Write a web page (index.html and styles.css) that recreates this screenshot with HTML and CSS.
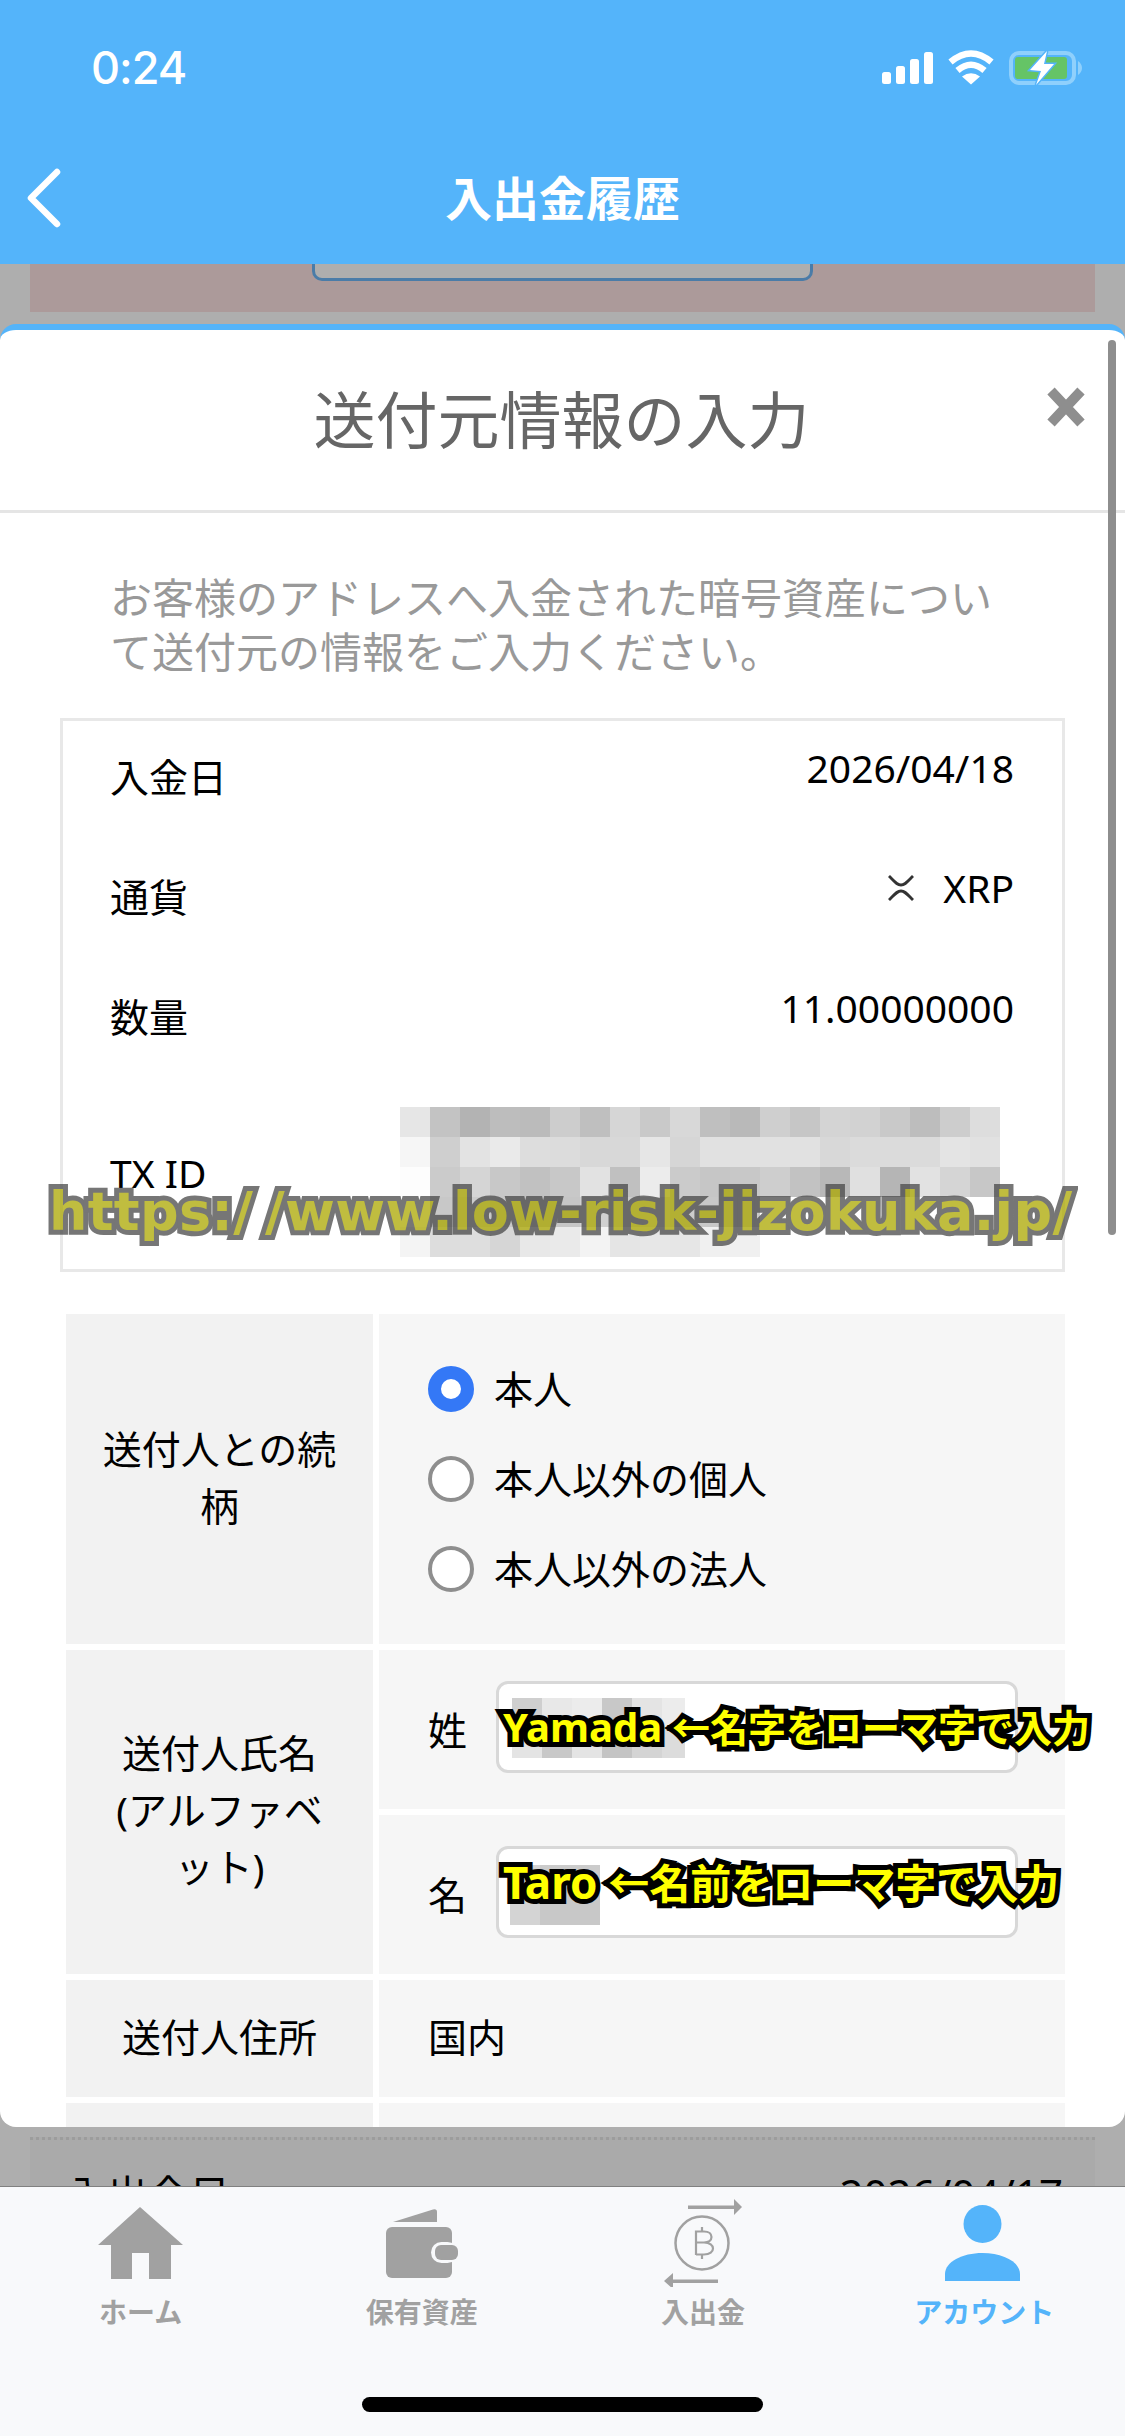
FILE: index.html
```html
<!DOCTYPE html>
<html lang="ja">
<head>
  <meta charset="UTF-8">
  <title>入出金履歴</title>
  <meta name="viewport" content="width=device-width, initial-scale=1">
  <link rel="stylesheet" href="styles.css">
</head>
<body>
  <header class="topbar">
    <div class="status">
      <span class="time">0:24</span>
      <svg class="status-icons" width="204" height="38" viewBox="880 50 204 38">
        <g fill="#fff">
          <rect x="882" y="73" width="9" height="12" rx="2.5"/>
          <rect x="896" y="67" width="9" height="18" rx="2.5"/>
          <rect x="910" y="60" width="9" height="25" rx="2.5"/>
          <rect x="924" y="53" width="9" height="32" rx="2.5"/>
          <path d="M962 77.500 Q971 71 980 77.500 L971 85.500 Z"/>
        </g>
        <g fill="none" stroke="#fff" stroke-width="6.500">
          <path d="M950.500 63 Q971 46 991.500 63"/>
          <path d="M957.500 71.500 Q971 60 984.500 71.500"/>
        </g>
        <rect x="1011" y="54" width="63" height="30" rx="8" fill="none" stroke="#8fd0fc" stroke-width="4"/>
        <path d="M1078 62 q4 3 4 7 t-4 7 z" fill="#8fd0fc"/>
        <rect x="1015" y="58" width="52" height="22" rx="3" fill="#65c466"/>
        <path d="M1047 52 L1030 71 L1041 72 L1036 86 L1054 65 L1044 65 Z" fill="#fff" stroke="#54b4fa" stroke-width="3" paint-order="stroke"/>
      </svg>
    </div>
    <div class="navrow">
      <svg class="back" width="36" height="60" viewBox="0 0 36 60">
        <path d="M31 4 L5 30 L31 56" fill="none" stroke="#fff" stroke-width="6.500" stroke-linecap="round" stroke-linejoin="round"/>
      </svg>
      <h1>入出金履歴</h1>
    </div>
  </header>

  <main class="backdrop">
    <div class="alert-panel"><div class="alert-btn"></div></div>
    <div class="history">
      <span>入出金日</span>
      <span class="history-date">2026/04/17</span>
    </div>
  </main>

  <section class="modal">
    <div class="modal-head">
      <h2>送付元情報の入力</h2>
      <svg class="close" width="40" height="40" viewBox="0 0 40 40">
        <path d="M5 4 L35 36 M35 4 L5 36" stroke="#8e8e8e" stroke-width="10"/>
      </svg>
    </div>
    <p class="lead">お客様のアドレスへ入金された暗号資産について送付元の情報をご入力ください。</p>

    <div class="info">
      <div class="info-row">
        <span class="info-label">入金日</span>
        <span class="info-value">2026/04/18</span>
      </div>
      <div class="info-row">
        <span class="info-label">通貨</span>
        <span class="info-value currency">
          <svg width="28" height="26" viewBox="0 0 28 26">
            <path d="M2 1 C8 7 10 10 14 10 C18 10 20 7 26 1 M2 25 C8 19 10 16 14 16 C18 16 20 19 26 25" fill="none" stroke="#333" stroke-width="2.800"/>
          </svg>
          XRP
        </span>
      </div>
      <div class="info-row">
        <span class="info-label">数量</span>
        <span class="info-value">11.00000000</span>
      </div>
      <div class="info-row tx-row">
        <span class="info-label">TX ID</span>
        <svg class="mosaic tx-mosaic" width="603" height="150" viewBox="0 0 20 5" shape-rendering="crispEdges">
          <g>
            <rect x="0" fill="#e6e6e6"/><rect x="1" fill="#c3c3c3"/><rect x="2" fill="#b3b3b3"/><rect x="3" fill="#bdbdbd"/><rect x="4" fill="#bbbbbb"/><rect x="5" fill="#cdcdcd"/><rect x="6" fill="#bfbfbf"/><rect x="7" fill="#d6d6d6"/><rect x="8" fill="#c9c9c9"/><rect x="9" fill="#d8d8d8"/><rect x="10" fill="#bfbfbf"/><rect x="11" fill="#b9b9b9"/><rect x="12" fill="#cfcfcf"/><rect x="13" fill="#c6c6c6"/><rect x="14" fill="#d4d4d4"/><rect x="15" fill="#d2d2d2"/><rect x="16" fill="#c9c9c9"/><rect x="17" fill="#bdbdbd"/><rect x="18" fill="#cdcdcd"/><rect x="19" fill="#dddddd"/>
          </g>
          <g transform="translate(0 1)">
            <rect x="0" fill="#f6f6f6"/><rect x="1" fill="#cfcfcf"/><rect x="2" fill="#e3e3e3"/><rect x="3" fill="#eaeaea"/><rect x="4" fill="#dddddd"/><rect x="5" fill="#dcdcdc"/><rect x="6" fill="#d8d8d8"/><rect x="7" fill="#d8d8d8"/><rect x="8" fill="#e6e6e6"/><rect x="9" fill="#d6d6d6"/><rect x="10" fill="#e1e1e1"/><rect x="11" fill="#e1e1e1"/><rect x="12" fill="#e1e1e1"/><rect x="13" fill="#e1e1e1"/><rect x="14" fill="#d8d8d8"/><rect x="15" fill="#dbdbdb"/><rect x="16" fill="#dbdbdb"/><rect x="17" fill="#dbdbdb"/><rect x="18" fill="#e4e4e4"/><rect x="19" fill="#e1e1e1"/>
          </g>
          <g transform="translate(0 2)">
            <rect x="0" fill="#fdfdfd"/><rect x="1" fill="#cbcbcb"/><rect x="2" fill="#d5d5d5"/><rect x="3" fill="#c8c8c8"/><rect x="4" fill="#c1c1c1"/><rect x="5" fill="#c8c8c8"/><rect x="6" fill="#e2e2e2"/><rect x="7" fill="#c0c0c0"/><rect x="8" fill="#ececec"/><rect x="9" fill="#cbcbcb"/><rect x="10" fill="#c6c6c6"/><rect x="11" fill="#c8c8c8"/><rect x="12" fill="#cecece"/><rect x="13" fill="#c2c2c2"/><rect x="14" fill="#b8b8b8"/><rect x="15" fill="#e0e0e0"/><rect x="16" fill="#b5b5b5"/><rect x="17" fill="#e2e2e2"/><rect x="18" fill="#d5d5d5"/><rect x="19" fill="#c7c7c7"/>
          </g>
          <g transform="translate(0 3)">
            <rect x="1" fill="#c8c8c8"/><rect x="2" fill="#cccccc"/><rect x="3" fill="#c8c8c8"/><rect x="4" fill="#c4c4c4"/><rect x="5" fill="#c6c6c6"/><rect x="6" fill="#d0d0d0"/><rect x="7" fill="#cccccc"/><rect x="8" fill="#d4d4d4"/><rect x="9" fill="#cccccc"/><rect x="10" fill="#c8c8c8"/><rect x="11" fill="#cacaca"/>
          </g>
          <g transform="translate(0 4)">
            <rect x="0" fill="#f4f4f4"/><rect x="1" fill="#dddddd"/><rect x="2" fill="#dedede"/><rect x="3" fill="#d6d6d6"/><rect x="4" fill="#e8e8e8"/><rect x="5" fill="#eaeaea"/><rect x="6" fill="#f3f3f3"/><rect x="7" fill="#e5e5e5"/><rect x="8" fill="#e7e7e7"/><rect x="9" fill="#e6e6e6"/><rect x="10" fill="#f0f0f0"/><rect x="11" fill="#f0f0f0"/>
          </g>
        </svg>
      </div>
    </div>

    <div class="form">
      <div class="form-label row-relation">送付人との続<br>柄</div>
      <div class="form-value radios">
        <label class="radio-row"><span class="radio checked"></span>本人</label>
        <label class="radio-row"><span class="radio"></span>本人以外の個人</label>
        <label class="radio-row"><span class="radio"></span>本人以外の法人</label>
      </div>

      <div class="form-label row-name">送付人氏名<br>(アルファベ<br>ット)</div>
      <div class="name-cells">
        <div class="name-cell">
          <span class="name-label">姓</span>
          <div class="field">
            <svg class="mosaic" width="173" height="60" viewBox="0 0 5.770 2" shape-rendering="crispEdges">
              <rect x="0" fill="#cfcfcf"/><rect x="1" fill="#e8e8e8"/><rect x="2" fill="#ececec"/><rect x="3" fill="#c8c8c8"/><rect x="4" fill="#e4e4e4"/><rect x="5" fill="#ececec"/>
              <g transform="translate(0 1)">
                <rect x="0" fill="#e4e4e4"/><rect x="1" fill="#c8c8c8"/><rect x="2" fill="#e4e4e4"/><rect x="3" fill="#c4c4c4"/><rect x="4" fill="#d4d4d4"/><rect x="5" fill="#dcdcdc"/>
              </g>
            </svg>
            <span class="note"><span class="note-latin">Yamada</span> ←名字をローマ字で入力</span>
          </div>
        </div>
        <div class="name-cell">
          <span class="name-label">名</span>
          <div class="field">
            <svg class="mosaic taro" width="91" height="60" viewBox="0 0 3 2" shape-rendering="crispEdges">
              <rect x="0" fill="#d4d4d4"/><rect x="1" fill="#cbcbcb"/><rect x="2" fill="#cbcbcb"/>
              <g transform="translate(0 1)">
                <rect x="0" fill="#d4d4d4"/><rect x="1" fill="#c8c8c8"/><rect x="2" fill="#c8c8c8"/>
              </g>
            </svg>
            <span class="note note-taro"><span class="note-latin">Taro</span> ←名前をローマ字で入力</span>
          </div>
        </div>
      </div>

      <div class="form-label row-address">送付人住所</div>
      <div class="form-value address">国内</div>

      <div class="form-label row-last"></div>
      <div class="form-value"></div>
    </div>

    <div class="scrollbar"></div>
  </section>

  <div class="watermark">https:<span class="gap-slash">/</span>/www.low-risk-jizokuka.jp/</div>

  <nav class="tabbar">
    <div class="tabs">
      <div class="tab">
        <svg width="100" height="92" viewBox="90 2195 100 92">
          <path d="M139 2207 L182 2245 L170 2245 L170 2279 L148 2279 L148 2253 L131 2253 L131 2279 L110 2279 L110 2245 L97 2245 Z" fill="#a1a1a1"/>
        </svg>
        <span>ホーム</span>
      </div>
      <div class="tab">
        <svg width="100" height="92" viewBox="372 2195 100 92">
          <path d="M393 2222 L433 2209.500 Q437 2208.500 437 2212 L437 2222 Z" fill="#a1a1a1"/>
          <rect x="386" y="2227" width="66" height="51" rx="6" fill="#a1a1a1"/>
          <rect x="431" y="2242" width="27" height="21" rx="10.500" fill="#f8f9fb"/>
          <rect x="435" y="2245" width="23" height="15" rx="6" fill="#a1a1a1"/>
        </svg>
        <span>保有資産</span>
      </div>
      <div class="tab">
        <svg width="100" height="92" viewBox="653 2195 100 92">
          <g fill="#a1a1a1">
            <rect x="688" y="2205.500" width="47" height="3.500"/>
            <path d="M734 2199 L742 2207 L734 2215 Z"/>
            <rect x="673" y="2279.500" width="45" height="3.500"/>
            <path d="M673 2273 L664 2281 L673 2289 Z"/>
          </g>
          <circle cx="702" cy="2243" r="26.500" fill="none" stroke="#a1a1a1" stroke-width="2.500"/>
          <path d="M696 2230.500 V2255 M696 2231.500 H704 C714 2231.500 714 2242.500 704 2242.500 H696 M704 2242.500 C716 2242.500 716 2254.500 704 2254.500 H696 M702 2227 V2231 M702 2255 V2259" fill="none" stroke="#a1a1a1" stroke-width="2.200"/>
        </svg>
        <span>入出金</span>
      </div>
      <div class="tab active">
        <svg width="100" height="92" viewBox="934 2195 100 92">
          <circle cx="982.500" cy="2224" r="19" fill="#54b4fa"/>
          <path d="M945 2281 V2274 C945 2262 962 2253 982.500 2253 C1003 2253 1020 2262 1020 2274 V2281 Z" fill="#54b4fa"/>
        </svg>
        <span>アカウント</span>
      </div>
    </div>
    <div class="home-indicator"></div>
  </nav>
</body>
</html>
```

FILE: styles.css
```css
* {
  box-sizing: border-box;
}
body {
  position: relative;
  display: flex;
  flex-direction: column;
  width: 1125px;
  height: 2436px;
  margin: 0;
  overflow: hidden;
  background-color: #aeaeae;
  color: #000;
  font-family: "Noto Sans", "Noto Sans CJK JP", sans-serif;
  font-size: 39px;
  line-height: 54px;
}

/* top bar */
.topbar {
  height: 264px;
  flex: none;
  background-color: #54b4fa;
  color: #fff;
}
.status {
  display: flex;
  justify-content: space-between;
  align-items: center;
  height: 132px;
  padding: 4px 41px 0 91px;
}
.time {
  font-family: Inter, sans-serif;
  font-size: 45px;
  font-weight: 500;
  letter-spacing: -1px;
}
.navrow {
  display: grid;
  grid-template-columns: 1fr auto 1fr;
  align-items: center;
  height: 132px;
}
.navrow h1 {
  margin: 0;
  font-size: 47px;
  font-weight: 700;
}
.back {
  margin-left: 26px;
}

/* page behind the modal */
.backdrop {
  flex: 1;
  overflow: hidden;
}
.alert-panel {
  height: 48px;
  margin: 0 30px;
  background-color: #ac9a9a;
}
.alert-btn {
  width: 501px;
  height: 17px;
  margin-left: 282px;
  background-color: #aeaeae;
  border: 3px solid #4a7ca8;
  border-top: none;
  border-radius: 0 0 10px 10px;
}
.history {
  display: flex;
  justify-content: space-between;
  height: 200px;
  margin: 1825px 30px 0;
  padding: 27px 32px 0 36px;
  background-color: #aaaaaa;
  border-top: 3px dotted #9c9c9c;
  font-size: 41px;
}
.history-date {
  font-size: 42px;
}

/* modal */
.modal {
  position: absolute;
  top: 324px;
  left: 0;
  right: 0;
  height: 1803px;
  overflow: hidden;
  background-color: #fff;
  border-top: 6px solid #54b4fa;
  border-radius: 16px;
}
.modal-head {
  display: grid;
  grid-template-columns: 1fr auto 1fr;
  align-items: center;
  height: 183px;
  padding-right: 39px;
  padding-left: 37px;
  border-bottom: 3px solid #e5e5e5;
}
.modal-head h2 {
  grid-column: 2;
  margin: 0;
  color: #666;
  font-size: 62px;
  font-weight: 400;
}
.close {
  justify-self: end;
  align-self: start;
  margin-top: 57px;
}
.lead {
  width: 890px;
  margin: 58px 0 39px 110px;
  color: #999;
  font-size: 42px;
}
.info {
  width: 1005px;
  margin-left: 60px;
  padding: 0 48px 0 47px;
  border: 3px solid #e8e8e8;
}
.info-row {
  display: flex;
  justify-content: space-between;
  height: 120px;
}
.info-label {
  padding-top: 29px;
}
.info-value {
  align-self: flex-start;
  padding-top: 20px;
}
.currency {
  display: flex;
  align-items: center;
  gap: 28px;
}
.tx-row {
  height: 188px;
}
.tx-row .info-label {
  padding-top: 65px;
}
.mosaic rect {
  width: 1px;
  height: 1px;
}
.tx-mosaic {
  margin: 26px 13px 0 0;
}

/* form table */
.form {
  display: grid;
  grid-template-columns: 307px 686px;
  grid-template-rows: 330px 324px 117px 60px;
  gap: 6px;
  margin: 42px 0 0 66px;
}
.form-label {
  display: flex;
  align-items: center;
  justify-content: center;
  padding: 0 20px 5px;
  background-color: #f2f2f2;
  line-height: 57px;
  text-align: center;
}
.form-value {
  background-color: #f6f6f6;
}
.radios {
  display: flex;
  flex-direction: column;
  justify-content: center;
  gap: 36px;
  padding-left: 49px;
}
.radio-row {
  display: flex;
  align-items: center;
  gap: 20px;
}
.radio {
  width: 46px;
  height: 46px;
  background-color: #fff;
  border: 4px solid #8e8e8e;
  border-radius: 50%;
}
.radio.checked {
  border: 13px solid #3478f6;
}
.name-cells {
  display: flex;
  flex-direction: column;
  gap: 6px;
}
.name-cell {
  display: flex;
  flex: 1;
  align-items: center;
  padding-left: 49px;
  background-color: #f6f6f6;
}
.name-label {
  width: 68px;
  flex: none;
}
.field {
  position: relative;
  width: 522px;
  height: 92px;
  margin-bottom: 6px;
  padding: 14px 0 0 13px;
  background-color: #fff;
  border: 3px solid #d8d8d8;
  border-radius: 12px;
}
.field .mosaic {
  display: block;
}
.field .taro {
  margin-left: -3px;
  margin-top: 2px;
}
.note {
  position: absolute;
  top: 16px;
  left: 4px;
  color: #ff0;
  font-size: 38px;
  font-weight: 700;
  white-space: nowrap;
  -webkit-text-stroke: 10px #000;
  paint-order: stroke fill;
}
.note-latin {
  font-size: 40px;
}
.note-taro {
  top: 6px;
  font-size: 41px;
}
.note-taro .note-latin {
  font-size: 44px;
}
.address {
  display: flex;
  align-items: center;
  padding: 0 0 4px 49px;
}
.scrollbar {
  position: absolute;
  top: 10px;
  right: 9px;
  width: 8px;
  height: 895px;
  background-color: #8e8e8e;
  border-radius: 4px;
}

.watermark {
  position: absolute;
  top: 1179px;
  left: 49px;
  color: #aba700;
  font-family: "DejaVu Sans", sans-serif;
  font-size: 54px;
  font-weight: 700;
  letter-spacing: 0.3px;
  line-height: 66px;
  white-space: nowrap;
  opacity: 0.75;
  -webkit-text-stroke: 10px #494949;
  paint-order: stroke fill;
}
.gap-slash {
  letter-spacing: 12px;
}

/* bottom tabs */
.tabbar {
  display: flex;
  flex: none;
  flex-direction: column;
  height: 250px;
  background-color: #f8f9fb;
  border-top: 1px solid #808080;
}
.tabs {
  display: grid;
  grid-template-columns: repeat(4, 1fr);
  padding-top: 8px;
}
.tab {
  display: flex;
  flex-direction: column;
  align-items: center;
  color: #a1a1a1;
  font-size: 28px;
  font-weight: 700;
  line-height: 40px;
}
.tab span {
  margin-top: 5px;
}
.tab.active {
  color: #54b4fa;
}
.home-indicator {
  width: 401px;
  height: 15px;
  margin: auto auto 24px;
  background-color: #000;
  border-radius: 8px;
}
```
